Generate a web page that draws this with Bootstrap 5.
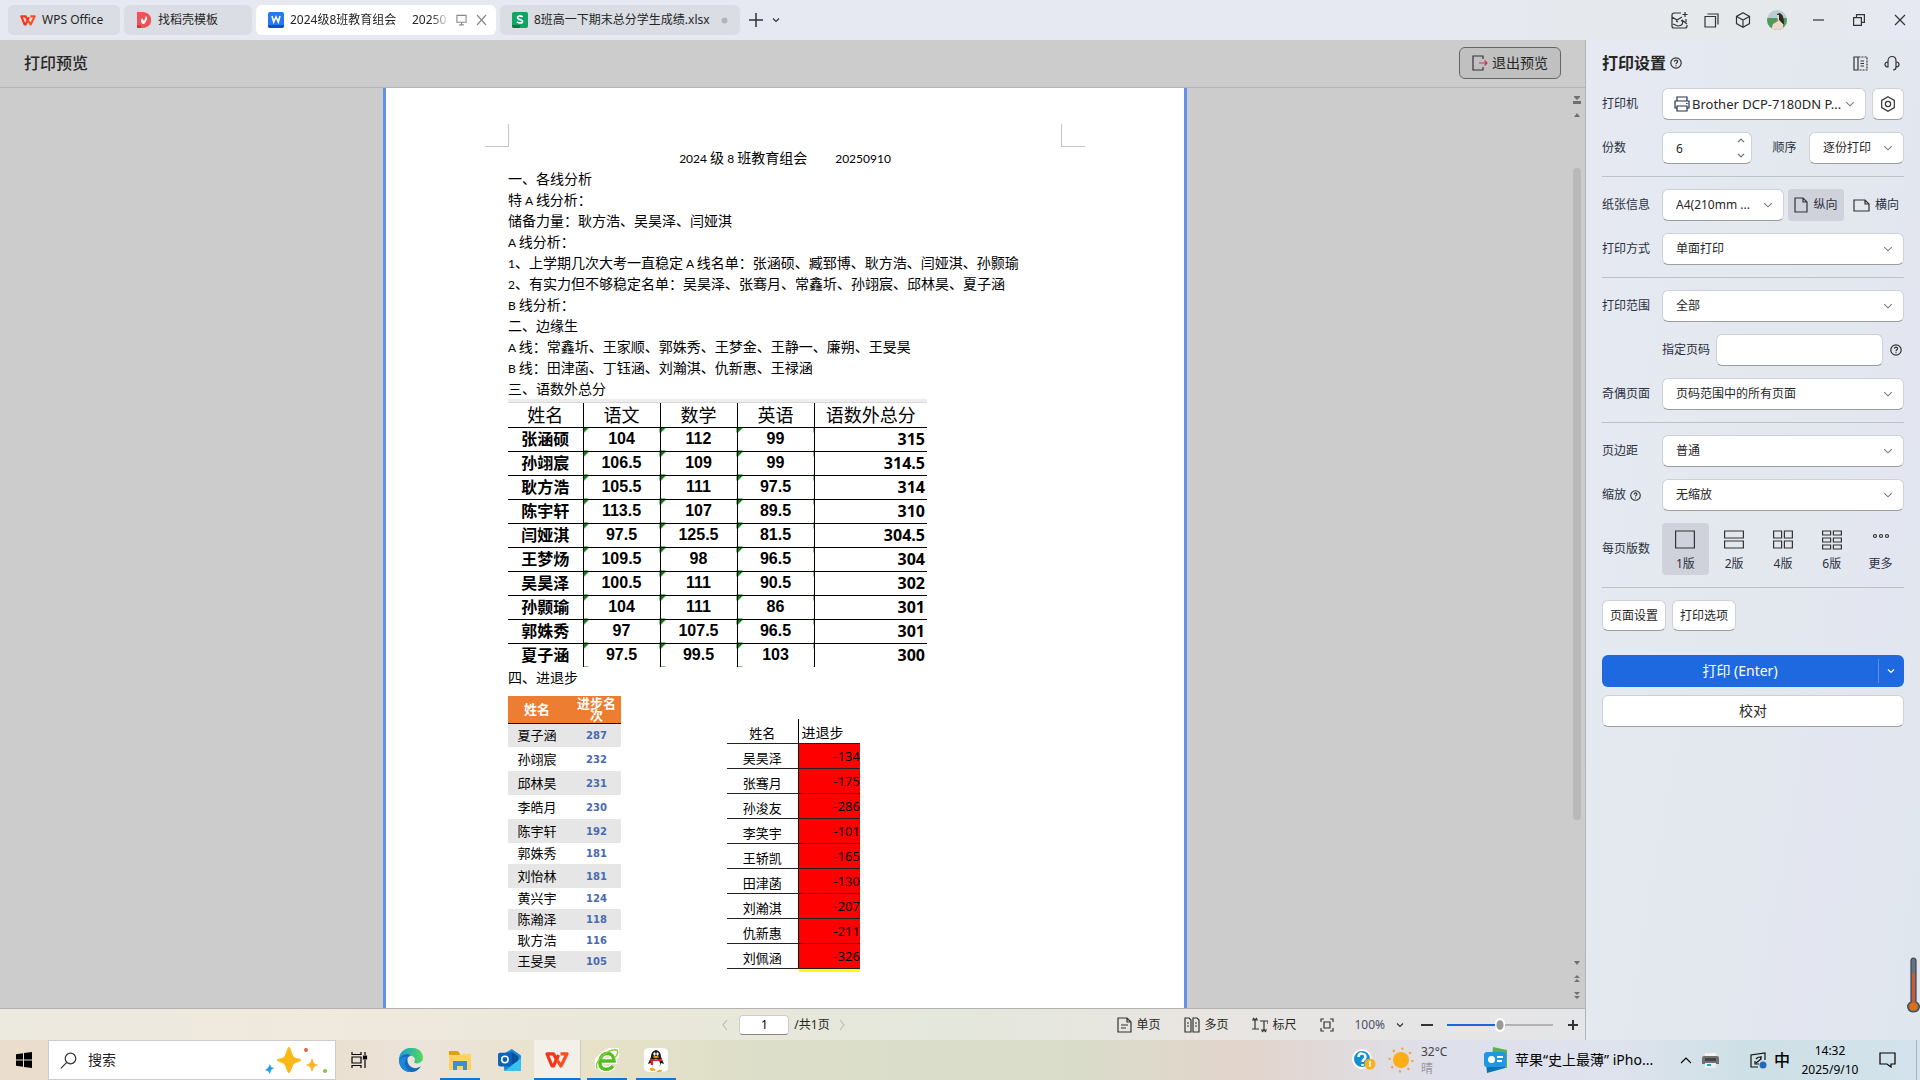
<!DOCTYPE html>
<html lang="zh-CN">
<head>
<meta charset="utf-8">
<meta name="viewport" content="width=device-width, initial-scale=1">
<title>打印预览</title>
<link href="https://cdn.jsdelivr.net/npm/bootstrap@5.3.0/dist/css/bootstrap.min.css" rel="stylesheet">
<style>
body{font-family:"Noto Sans","Noto Sans CJK SC",sans-serif;font-size:12px;line-height:16px;color:#262626;background:#e6e9f2;overflow:hidden}
button{font:inherit;color:inherit;border:0;background:none;padding:0}
svg{display:block;flex:none;fill:none;stroke:#333;stroke-width:1.2}
/* title bar */
.titlebar{height:40px;background:linear-gradient(90deg,#e6e9f2 70%,#e5e9eb 92%,#e6e9f2);padding-left:8px}
.doc-tab{height:30px;background:#dadde4;border-radius:6px;display:flex;align-items:center;white-space:nowrap;overflow:hidden}
.doc-tab.current{background:#fff}
.fade-name{width:160px;white-space:pre;text-align:left;-webkit-mask-image:linear-gradient(90deg,#000 88%,transparent);mask-image:linear-gradient(90deg,#000 88%,transparent)}
.win-btns{gap:16px;padding-right:14px}
/* preview */
.preview{background:#ccc;border-right:1px solid #b3b3b3}
.preview-head{height:48px;border-bottom:1px solid #b3b3b3;padding:0 24px 2px}
.preview-head h1{font-size:16px;line-height:24px;font-weight:500;margin:0}
.exit-btn{width:102px;height:32px;background:#c0c0c0;border:1px solid #666;border-radius:6px;font-size:14px}
.sheet{width:804px;background:#fff;border-left:3px solid #6490e8;border-right:3px solid #6490e8}
.crop-row{padding:36px 99px 0 99px}
.crop-mark{width:24px;height:23px;border-bottom:1px solid #c4c4c4}
.crop-l{border-right:1px solid #c4c4c4}.crop-r{border-left:1px solid #c4c4c4}
.sheet-body{padding:0 122px;color:#000}
.sheet-body p{margin:0;font-size:14px;line-height:21px;height:21px;white-space:nowrap}
.ltn{font-family:Lato,"Noto Sans",sans-serif;font-size:12px;line-height:12px}
.title-gap{padding-left:28px}
.strip{height:4px;background:#ececec;width:419px;border-bottom:1px solid #d8d8d8}
.scores{width:419px;table-layout:fixed;border-collapse:collapse;text-align:center;line-height:20px;font-size:16px;font-weight:700}
.scores th{font-size:18px;font-weight:400;height:24px;padding:0}
.scores td{height:24px;padding:0}
.scores th,.scores td{border-bottom:1px solid #000;border-left:1px solid #000}
.scores th:first-child,.scores td:first-child{border-left:0}
.scores tr:last-child td{border-bottom:0}
.scores td:nth-child(n+2):nth-child(-n+4){font-family:"Liberation Sans",sans-serif;background:linear-gradient(135deg,#0a800a 4px,transparent 4px)}
.scores td:last-child{text-align:right;padding-right:2px;font-family:"Open Sans",sans-serif}
.risers{width:113px;table-layout:fixed;font-size:13px;line-height:13px;text-align:center;border-collapse:collapse}
.risers th{background:#ed7d31;color:#fff;border-bottom:1px solid #111;height:27px;padding:0;line-height:12px;font-weight:700}
.risers td{padding:0;height:21px}
.risers .tall td{height:24px}
.risers tbody tr:nth-child(odd){background:#e7e6e6}
.risers td:last-child{font:700 10px/13px "DejaVu Sans",sans-serif;color:#4a6ab2;padding-left:6px}
.risers th:last-child{padding:0 4px 0 10px}
.fallers{width:133px;table-layout:fixed;font-size:13px;line-height:20px;border-collapse:collapse}
.fallers th,.fallers td{padding:0;height:25px;border-bottom:1px solid #222;text-align:center;vertical-align:bottom;font-weight:400}
.fallers td:last-child{background:#f00;text-align:right;vertical-align:middle}
.fallers th:last-child{font-size:14px;text-align:left;padding-left:3px}
.fallers th:last-child,.fallers td:last-child{border-left:1px solid #000}
.under{height:3px;width:61px;background:#ff0;margin-left:72px}
.scroller{width:15px;padding:8px 4px 8px 3px}
.thumb{height:652px;width:8px;border-radius:4px;background:#b9b9b9}
.scroller svg{stroke:none;fill:#707070}
/* status bar */
.statusbar{height:32px;border-top:1px solid #b3b3b3;border-right:1px solid #b3b3b3;background:linear-gradient(90deg,#ece9df,#f0e9dd 20%,#e9e8da 42%,#e4e7dc 60%,#e8e5e1 75%,#e4e5e8)}
.status-side{flex:1 1 0;min-width:0}
.page-box{width:50px;height:20px;border:1px solid #ccc;border-bottom-color:#888;border-radius:4px;text-align:center;font-size:12px;padding:0}
.zoomer{-webkit-appearance:none;appearance:none;width:106px;height:16px;background:linear-gradient(90deg,#1f66dc 50%,#b4b4b4 50%) center/100% 2px no-repeat}
.zoomer::-webkit-slider-thumb{-webkit-appearance:none;width:10px;height:14px;border-radius:7px;background:radial-gradient(#999 3px,#fff 4px);border:0}
/* settings panel */
.panel{width:334px;padding:0 16px;background:linear-gradient(100deg,#e6e9f2,#e3e8ee 55%,#e3e6f0 75%,#dfe6ee)}
.panel-head{height:48px;padding-bottom:2px}
.panel h2{font-size:16px;line-height:24px;font-weight:700;margin:0}
.set-row{display:flex;align-items:center;height:32px;margin-bottom:12px;color:#2a3040;white-space:nowrap}
.set-label{width:60px;flex:none}
.box{height:32px;border:1px solid #cdd0d6;border-bottom-color:#9b9da2;border-radius:6px;background-color:#fff;font-size:12px;line-height:16px;color:#262626}
select.box{--bs-form-select-bg-img:url("data:image/svg+xml,%3Csvg xmlns='http://www.w3.org/2000/svg' viewBox='0 0 16 16'%3E%3Cpath fill='none' stroke='%23777' stroke-width='1.4' d='m3 5.500 5 5 5-5'/%3E%3C/svg%3E");padding:0 20px 0 13px;background-size:12px;background-position:right 9px center}
#printer{font-size:13px;padding-left:29px}
#order{width:95px;flex:none}
.rule{border:0;border-top:1px solid #bfc2c8;opacity:1;margin:0 0 12px}
.toggle{height:32px;width:56px;border-radius:4px;display:flex;align-items:center;justify-content:center;gap:5px}
.toggle.on,.nup.on{background:#cfd2da}
.nup{width:47px;height:52px;border-radius:4px;display:flex;flex-direction:column;align-items:center;padding-top:7px;gap:6px;margin-right:2px}
.print-btn{height:32px;background:#1f69e0;color:#fff;border-radius:6px;font-size:14px}
.print-main{border-right:1px solid #5790ef;height:24px}
.thermo{position:absolute;right:0;top:957px}
/* taskbar */
.taskbar{height:40px;color:#000;background:linear-gradient(90deg,#eaddce,#eadfcd 16%,#ece3da 22%,#e7e2c8 31%,#dcdec9 40%,#d9ddca 55%,#e3d5cc 65%,#dee0ec 75%,#dfe3ee 84%,#cde0e5 91%,#d3e2ec)}
.search{width:288px;height:40px;background:#fff;border:1px solid #ccc;font-size:14px;padding:0 8px 0 11px}
.search input{border:0;outline:0;width:60px;font-size:14px;padding:0;color:#000}
.search input::placeholder{color:#222}
.app{width:40px;height:40px;display:flex;align-items:center;justify-content:center;margin-right:9px}
.app.open{border-bottom:2px solid #0a78d4;padding-top:2px}
.app.front{background:#f3f0ea;width:47px;margin-right:6px;border-right:1px solid #cfccc0}
.clock{width:72px;text-align:center;line-height:19px}
</style>
<script src="https://cdn.jsdelivr.net/npm/bootstrap@5.3.0/dist/js/bootstrap.bundle.min.js"></script>
</head>
<body class="vh-100 d-flex flex-column position-relative">
<svg width="0" height="0" class="position-absolute">
 <symbol id="wps" viewBox="0 0 24 16"><g fill="none" stroke="#f5341e" stroke-width="3.200" stroke-linejoin="round"><path d="M9.500 1.800H2L7 14h1.500L13.500 3"/><path d="m12 8 4 6 6-12.200h-6.500" stroke="#f8501e"/><path d="m8.500 1.800 3 6"/></g></symbol>
 <symbol id="ask" viewBox="0 0 12 12"><circle cx="6" cy="6" r="5.200"/><path d="M4.500 4.800C4.500 2.500 7.700 2.700 7.600 4.600 7.500 5.800 6 5.800 6 7.200M6 8.200v1.100"/></symbol>
 <symbol id="down" viewBox="0 0 10 10"><path d="m2 3.500 3 3 3-3"/></symbol>
</svg>

<header class="titlebar d-flex align-items-center flex-shrink-0">
 <div class="d-flex" style="gap:4px">
  <button class="doc-tab" style="width:112px;padding-left:12px;gap:6px"><svg width="16" height="11"><use href="#wps"/></svg>WPS Office</button>
  <button class="doc-tab" style="width:128px;padding-left:13px;gap:7px"><svg width="14" height="16" viewBox="0 0 14 16"><path d="M0 0h6c11 1 11 15 0 16H0z" fill="#f0525a" stroke="none"/><path d="M4 8c0 5 4 5 5 1 2-2 1-4 0-5-1 2-1 3-2 5L5 6z" fill="#fff" stroke="none"/><path d="M0 13h4v3H0z" fill="#d93540" stroke="none"/></svg>找稻壳模板</button>
  <button class="doc-tab current" style="width:240px;padding-left:12px;gap:6px"><svg width="16" height="16" viewBox="0 0 16 16"><rect width="16" height="16" rx="2" fill="#2878f5" stroke="none"/><path d="M0 13h16v1a2 2 0 0 1-2 2H2a2 2 0 0 1-2-2z" fill="#1250c4" stroke="none"/><path d="m4 4 1.700 6L8 5l2.300 5L12 4" style="stroke:#fff" stroke-width="1.600"/></svg><span class="fade-name">2024级8班教育组会     20250</span><svg width="11" height="12" viewBox="0 0 12 12" style="stroke:#888"><path d="M1 1h10v7.500H1zM6 9v2M3.500 11.300h5"/></svg><svg width="14" height="12" viewBox="0 0 14 12" style="stroke:#888"><path d="m4 1 9 10M13 1 4 11"/></svg></button>
  <button class="doc-tab" style="width:240px;padding-left:12px;gap:6px"><svg width="16" height="16" viewBox="0 0 16 16"><rect width="16" height="16" rx="2" fill="#10a566" stroke="none"/><path d="M0 13h8v3H2a2 2 0 0 1-2-2z" fill="#087a4b" stroke="none"/><path d="M10.500 5C9 3.300 5.500 3.700 5.500 5.800S10.700 7.300 10.600 9.400C10.500 11.500 6.500 11.500 5 9.700" stroke="#fff" stroke-width="1.700"/></svg>8班高一下期末总分学生成绩.xlsx<svg width="7" height="7" style="margin-left:5px"><circle cx="3.500" cy="3.500" r="3" fill="#b3b5ba" stroke="none"/></svg></button>
 </div>
 <button aria-label="新建" style="margin-left:9px"><svg width="14" height="14" viewBox="0 0 14 14"><path d="M7 0v14M0 7h14" stroke-width="1.500"/></svg></button>
 <button aria-label="标签列表" style="margin-left:8px"><svg width="10" height="10" stroke-width="1.500"><use href="#down"/></svg></button>
 <div class="win-btns d-flex align-items-center ms-auto">
  <svg width="17" height="17" viewBox="0 0 17 17"><path d="M10 1H3a2 2 0 0 0-2 2v11a2 2 0 0 0 2 2h11a2 2 0 0 0 2-2v-1M1 5l5 3 5-3M5 9l2 1M10 9l2-1M2 12l5 2c4 0 6-3 4-6l5 4M14 0v5M11.500 2.500h5M15 7v3"/></svg>
  <svg width="15" height="15" viewBox="0 0 15 15"><path d="M1 3.500h10.500V14H1zM3.500 1H14v10.500"/></svg>
  <svg width="16" height="16" viewBox="0 0 16 16"><path d="m8 .800 6.500 3.600v7.200L8 15.200l-6.500-3.600V4.400zM1.500 4.400 8 8l6.500-3.600M8 8v7"/></svg>
  <svg width="20" height="20" viewBox="0 0 20 20"><defs><clipPath id="face"><circle cx="10" cy="10" r="10"/></clipPath></defs><g clip-path="url(#face)" stroke="none"><path fill="#b9ccd2" d="M0 0h20v20H0z"/><path fill="#4f9a5c" d="M0 8h20v12H0z"/><path fill="#2c2825" d="M10 4c5-3 7 3 7 10l-3 1-3-8z"/><path fill="#eed8c8" d="M10 5h2v5l4 4v6H4l2-6 5-3z"/></g></svg>
  <div class="d-flex align-items-center" style="gap:29px;margin-left:10px">
   <svg width="11" height="12"><path d="M0 6h11"/></svg>
   <svg width="12" height="12" viewBox="0 0 12 12"><path d="M.6 3.600h7.800v7.800H.6zM3.500 3.500V.6h7.900v7.800H8.500"/></svg>
   <svg width="12" height="12" viewBox="0 0 12 12"><path d="m1 1 10 10M11 1 1 11"/></svg>
  </div>
 </div>
</header>

<div class="d-flex flex-grow-1" style="min-height:0">
 <div class="d-flex flex-column flex-grow-1" style="min-width:0">
  <main class="preview flex-grow-1 d-flex flex-column" style="min-height:0">
   <div class="preview-head d-flex align-items-center justify-content-between flex-shrink-0">
    <h1>打印预览</h1>
    <button class="exit-btn d-flex align-items-center justify-content-center gap-1"><svg width="16" height="16" viewBox="0 0 16 16"><path d="M11 4V1H1v14h10v-3"/><path d="M7 8h8M12.500 5.500 15 8l-2.500 2.500" stroke="#d0314f"/></svg>退出预览</button>
   </div>
   <div class="d-flex flex-grow-1" style="min-height:0">
    <div class="flex-grow-1 d-flex justify-content-center">
     <article class="sheet">
      <div class="crop-row d-flex justify-content-between"><div class="crop-mark crop-l"></div><div class="crop-mark crop-r"></div></div>
      <div class="sheet-body">
       <p class="text-center"><span class="ltn">2024 </span>级<span class="ltn"> 8 </span>班教育组会<span class="ltn title-gap">20250910</span></p>
       <p>一、各线分析</p>
       <p>特<span class="ltn"> A </span>线分析：</p>
       <p>储备力量：耿方浩、吴昊泽、闫娅淇</p>
       <p><span class="ltn">A </span>线分析：</p>
       <p><span class="ltn">1</span>、上学期几次大考一直稳定<span class="ltn"> A </span>线名单：张涵硕、臧郅博、耿方浩、闫娅淇、孙颢瑜</p>
       <p><span class="ltn">2</span>、有实力但不够稳定名单：吴昊泽、张骞月、常鑫圻、孙翊宸、邱林昊、夏子涵</p>
       <p><span class="ltn">B </span>线分析：</p>
       <p>二、边缘生</p>
       <p><span class="ltn">A </span>线：常鑫圻、王家顺、郭姝秀、王梦金、王静一、廉朔、王旻昊</p>
       <p><span class="ltn">B </span>线：田津菡、丁钰涵、刘瀚淇、仇新惠、王禄涵</p>
       <p>三、语数外总分</p>
       <div class="strip"></div>
       <table class="scores">
        <colgroup><col style="width:75px"><col style="width:77px"><col style="width:77px"><col style="width:77px"><col></colgroup>
        <thead><tr><th>姓名</th><th>语文</th><th>数学</th><th>英语</th><th>语数外总分</th></tr></thead>
        <tbody>
        <tr><td>张涵硕</td><td>104</td><td>112</td><td>99</td><td>315</td></tr>
        <tr><td>孙翊宸</td><td>106.5</td><td>109</td><td>99</td><td>314.5</td></tr>
        <tr><td>耿方浩</td><td>105.5</td><td>111</td><td>97.5</td><td>314</td></tr>
        <tr><td>陈宇轩</td><td>113.5</td><td>107</td><td>89.5</td><td>310</td></tr>
        <tr><td>闫娅淇</td><td>97.5</td><td>125.5</td><td>81.5</td><td>304.5</td></tr>
        <tr><td>王梦炀</td><td>109.5</td><td>98</td><td>96.5</td><td>304</td></tr>
        <tr><td>吴昊泽</td><td>100.5</td><td>111</td><td>90.5</td><td>302</td></tr>
        <tr><td>孙颢瑜</td><td>104</td><td>111</td><td>86</td><td>301</td></tr>
        <tr><td>郭姝秀</td><td>97</td><td>107.5</td><td>96.5</td><td>301</td></tr>
        <tr><td>夏子涵</td><td>97.5</td><td>99.5</td><td>103</td><td>300</td></tr>
        </tbody>
       </table>
       <p>四、进退步</p>
       <div class="d-flex align-items-end" style="gap:106px;padding-top:8px">
        <table class="risers">
         <colgroup><col style="width:58px"><col></colgroup>
         <thead><tr><th>姓名</th><th>进步名次</th></tr></thead>
         <tbody>
         <tr class="tall"><td>夏子涵</td><td>287</td></tr>
         <tr class="tall"><td>孙翊宸</td><td>232</td></tr>
         <tr class="tall"><td>邱林昊</td><td>231</td></tr>
         <tr class="tall"><td>李皓月</td><td>230</td></tr>
         <tr class="tall"><td>陈宇轩</td><td>192</td></tr>
         <tr><td>郭姝秀</td><td>181</td></tr>
         <tr class="tall"><td>刘怡林</td><td>181</td></tr>
         <tr><td>黄兴宇</td><td>124</td></tr>
         <tr><td>陈瀚泽</td><td>118</td></tr>
         <tr><td>耿方浩</td><td>116</td></tr>
         <tr><td>王旻昊</td><td>105</td></tr>
         </tbody>
        </table>
        <div>
         <table class="fallers">
          <colgroup><col style="width:71px"><col></colgroup>
          <thead><tr><th>姓名</th><th>进退步</th></tr></thead>
          <tbody>
          <tr><td>吴昊泽</td><td>-134</td></tr>
          <tr><td>张骞月</td><td>-175</td></tr>
          <tr><td>孙浚友</td><td>-286</td></tr>
          <tr><td>李笑宇</td><td>-101</td></tr>
          <tr><td>王轿凯</td><td>-165</td></tr>
          <tr><td>田津菡</td><td>-130</td></tr>
          <tr><td>刘瀚淇</td><td>-207</td></tr>
          <tr><td>仇新惠</td><td>-211</td></tr>
          <tr><td>刘佩涵</td><td>-326</td></tr>
          </tbody>
         </table>
         <div class="under"></div>
        </div>
       </div>
      </div>
     </article>
    </div>
    <div class="scroller d-flex flex-column align-items-center justify-content-between flex-shrink-0">
     <div class="d-flex flex-column align-items-center">
      <svg width="8" height="9" viewBox="0 0 8 9"><path d="M1 0h6v1L4 4 1 1zM0 5h8v3H0z"/></svg>
      <svg width="6" height="5" viewBox="0 0 6 5" style="margin:8px 0 50px"><path d="M3 0 6 4H0z"/></svg>
      <div class="thumb"></div>
     </div>
     <div class="d-flex flex-column align-items-center" style="gap:9px">
      <svg width="6" height="5" viewBox="0 0 6 5"><path d="M0 0h6L3 4z"/></svg>
      <svg width="6" height="8" viewBox="0 0 6 8"><path d="m3 0 3 3H0zM3 4l3 3H0z"/></svg>
      <svg width="6" height="8" viewBox="0 0 6 8"><path d="M0 0h6L3 3zM0 4h6L3 7z"/></svg>
     </div>
    </div>
   </div>
  </main>
  <footer class="statusbar d-flex align-items-center flex-shrink-0">
   <div class="status-side"></div>
   <div class="d-flex align-items-center" style="margin-right:12px">
    <button aria-label="上一页"><svg width="8" height="12" viewBox="0 0 8 12" style="stroke:#bbb;margin-right:10px"><path d="M6 1 2 6l4 5"/></svg></button>
    <input class="page-box" aria-label="页码" value="1"><span style="margin:0 8px 0 5px">/共1页</span>
    <button aria-label="下一页"><svg width="8" height="12" viewBox="0 0 8 12" style="stroke:#bbb"><path d="m2 1 4 5-4 5"/></svg></button>
   </div>
   <div class="status-side d-flex align-items-center justify-content-end" style="padding-right:6px">
    <button class="d-flex align-items-center gap-1" style="margin-right:24px"><svg width="15" height="16" viewBox="0 0 15 16"><path d="M1 1h9l4 4v10H1zM10 1v4h4M4 8h7M4 11h5"/></svg>单页</button>
    <button class="d-flex align-items-center gap-1" style="margin-right:24px"><svg width="16" height="16" viewBox="0 0 16 16"><path d="M1 1h4l2 2v12H1zM9 1h4l2 2v12H9zM3 6h2M3 9h2M11 6h2M11 9h2"/></svg>多页</button>
    <button class="d-flex align-items-center gap-1" style="margin-right:24px"><svg width="16" height="16" viewBox="0 0 16 16"><path d="M0 3h6M3 3v9M0 12h7M1 1l2 2 2-2M8 4h8v3M12 4v9M9 13h6M10 15l2-2 2 2"/></svg>标尺</button>
    <button aria-label="适应页面" style="margin-right:20px"><svg width="14" height="14" viewBox="0 0 14 14"><path d="M1 4V1h3M10 1h3v3M13 10v3h-3M4 13H1v-3M4 4h6v6H4z"/></svg></button>
    <button class="d-flex align-items-center" style="gap:10px;color:#46516a;margin-right:16px">100%<svg width="10" height="10" stroke-width="2"><use href="#down"/></svg></button>
    <button aria-label="缩小"><svg width="12" height="12"><path d="M0 6h12" stroke-width="2"/></svg></button>
    <input class="zoomer" type="range" aria-label="缩放比例" min="0" max="100" value="50" style="margin:0 14px">
    <button aria-label="放大"><svg width="12" height="12"><path d="M1 6h10M6 1v10" stroke-width="2"/></svg></button>
   </div>
  </footer>
 </div>

 <aside class="panel flex-shrink-0">
  <div class="panel-head d-flex align-items-center">
   <h2>打印设置</h2><svg width="12" height="12" style="margin-left:4px"><use href="#ask"/></svg>
   <svg class="ms-auto" width="15" height="15" viewBox="0 0 15 15"><path d="M5.500 1H14v13H5.500" stroke-dasharray="2 1"/><path d="M1 1h4v13H1zM7.500 5H11M7.500 7.500H11M7.500 10H11"/></svg>
   <svg width="16" height="16" viewBox="0 0 16 16" style="margin-left:16px;margin-right:4px"><path d="M4 7c-2 0-3 1-3 2.500S2 12 4 12V6c0-6 8-6 8 0v6c2 0 3-1 3-2.500S14 7 12 7M12 12c0 2-1 3-3 3"/></svg>
  </div>
  <div class="set-row"><label class="set-label" for="printer">打印机</label>
   <div class="position-relative flex-grow-1"><select id="printer" class="form-select box"><option>Brother DCP-7180DN P...</option></select>
    <svg class="position-absolute" style="left:12px;top:8px;stroke:#24304a" width="16" height="16" viewBox="0 0 16 16"><path d="M3 5V1h10v4M3 12H1V5h14v7h-2M3 10h10v5H3zM12 7.500h1.500"/></svg></div>
   <button class="box d-flex align-items-center justify-content-center" aria-label="打印机属性" style="width:32px;margin-left:6px"><svg width="16" height="16" viewBox="0 0 16 16"><path d="m8 .700 6.300 3.700v7.200L8 15.300l-6.300-3.700V4.400z"/><circle cx="8" cy="8" r="2.600"/></svg></button></div>
  <div class="set-row"><label class="set-label" for="copies">份数</label>
   <div class="position-relative"><input id="copies" class="box" value="6" style="width:90px;padding:0 13px"><svg class="position-absolute" style="right:6px;top:4px;stroke:#777" width="10" height="24" viewBox="0 0 10 24"><path d="m2 6 3-3 3 3M2 18l3 3 3-3"/></svg></div>
   <label class="ms-auto me-auto" for="order" style="padding-left:8px">顺序</label><select id="order" class="form-select box"><option>逐份打印</option></select></div>
  <hr class="rule">
  <div class="set-row"><label class="set-label" for="paper">纸张信息</label><select id="paper" class="form-select box" style="width:122px"><option>A4(210mm ...</option></select>
   <button class="toggle on" style="margin-left:4px"><svg width="14" height="16" viewBox="0 0 14 16"><path d="M1 1h8l4 4v10H1zM9 1v4h4"/></svg>纵向</button><button class="toggle" style="margin-left:4px"><svg width="17" height="13" viewBox="0 0 17 13"><path d="M1 1h11l4 4v7H1zM12 1v4h4"/></svg>横向</button></div>
  <div class="set-row"><label class="set-label" for="mode">打印方式</label><select id="mode" class="form-select box"><option>单面打印</option></select></div>
  <hr class="rule">
  <div class="set-row"><label class="set-label" for="range">打印范围</label><select id="range" class="form-select box"><option>全部</option></select></div>
  <div class="set-row" style="padding-left:60px"><label for="pages" style="margin-right:6px">指定页码</label><input id="pages" class="box flex-fill" style="min-width:0"><svg width="12" height="12" style="margin:0 2px 0 7px"><use href="#ask"/></svg></div>
  <div class="set-row"><label class="set-label" for="odd">奇偶页面</label><select id="odd" class="form-select box"><option>页码范围中的所有页面</option></select></div>
  <hr class="rule">
  <div class="set-row"><label class="set-label" for="margin">页边距</label><select id="margin" class="form-select box"><option>普通</option></select></div>
  <div class="set-row"><label class="set-label d-flex align-items-center gap-1" for="scale">缩放<svg width="11" height="11"><use href="#ask"/></svg></label><select id="scale" class="form-select box"><option>无缩放</option></select></div>
  <div class="set-row" style="height:52px"><span class="set-label">每页版数</span>
   <button class="nup on"><svg width="20" height="20" viewBox="0 0 20 20"><path d="M.6 1h18.800v17H.6z"/></svg>1版</button>
   <button class="nup"><svg width="20" height="20" viewBox="0 0 20 20"><path d="M.6 1h18.800v7H.6zM.6 11h18.800v7H.6z"/></svg>2版</button>
   <button class="nup"><svg width="20" height="20" viewBox="0 0 20 20"><path d="M.6 1h8v7h-8zM11.400 1h8v7h-8zM.6 11h8v7h-8zM11.400 11h8v7h-8z"/></svg>4版</button>
   <button class="nup"><svg width="20" height="20" viewBox="0 0 20 20"><path d="M.6 1h8v4h-8zM11.400 1h8v4h-8zM.6 8h8v4h-8zM11.400 8h8v4h-8zM.6 15h8v4h-8zM11.400 15h8v4h-8z"/></svg>6版</button>
   <button class="nup me-0"><svg width="20" height="20" viewBox="0 0 20 20"><circle cx="4" cy="6" r="1.500"/><circle cx="10" cy="6" r="1.500"/><circle cx="16" cy="6" r="1.500"/></svg>更多</button></div>
  <hr class="rule">
  <div class="d-flex" style="gap:6px;margin-bottom:24px"><button class="box" style="width:64px;height:31px">页面设置</button><button class="box" style="width:64px;height:31px">打印选项</button></div>
  <div class="print-btn d-flex align-items-center"><button class="print-main flex-grow-1">打印 (Enter)</button><button aria-label="更多打印方式" style="padding:0 8px 0 7px"><svg width="10" height="10" style="stroke:#fff"><use href="#down"/></svg></button></div>
  <button class="box w-100 mt-2" style="font-size:14px">校对</button>
 </aside>
</div>

<svg class="thermo" width="13" height="57" viewBox="0 0 13 57"><path d="M4 4c0-4 5-4 5 0v41c6 3 3 10-2.500 10S-2 48 4 45z" fill="#66727e" stroke="#3d4650"/><path d="M6.500 16v33" stroke="#e0542c" stroke-width="2.500"/><circle cx="6.500" cy="49.500" r="4" fill="#e0700c" stroke="none"/></svg>

<nav class="taskbar d-flex align-items-center flex-shrink-0">
 <button aria-label="开始" class="d-flex justify-content-center" style="width:48px"><svg width="16" height="16" viewBox="0 0 16 16"><path d="M0 2.300 7 1.300V7.600H0zM8 1.100 16 0v7.600H8zM0 8.500h7v6.300l-7-1zM8 8.500h8V16l-8-1.100z" fill="#000" stroke="none"/></svg></button>
 <div class="search d-flex align-items-center"><svg width="17" height="17" viewBox="0 0 17 17"><circle cx="10.500" cy="6.500" r="5.300"/><path d="m6.800 10.300-6 6"/></svg><input placeholder="搜索" aria-label="搜索" style="margin-left:11px">
  <svg class="ms-auto" width="62" height="28" viewBox="0 0 62 28"><g stroke="none"><path d="M24 1c2 0 3 8 5 10s7 1 7 3-5 2-7 4-3 9-5 9-3-7-5-9-7-2-7-4 5-1 7-3 3-10 5-10z" fill="#fbb917"/><path d="m47 12 2 5 4 2-4 2-2 5-2-5-4-2 4-2z" fill="#fbb62b"/><path d="m5 18 1 3 3 1-3 2-1 4-2-3-3-1 3-2z" fill="#1f9cea"/><circle cx="41" cy="4" r="2" fill="#ee6237"/><circle cx="60" cy="25" r="2" fill="#82c341"/></g></svg></div>
 <button aria-label="任务视图" class="d-flex justify-content-center" style="width:47px"><svg width="17" height="16" viewBox="0 0 17 16" style="stroke:#000"><path d="M1 0v2.500h9V0M1 5h9v6H1zM1 16v-2.500h9V16M14 0v3M14 8v8"/><path d="M12.500 4h3v3h-3z" fill="#000"/></svg></button>
 <button class="app" aria-label="Edge" style="margin:0 9px 0 8px"><svg width="24" height="24" viewBox="0 0 24 24"><defs><linearGradient id="eg"><stop stop-color="#159bdc"/><stop offset="1" stop-color="#55d858"/></linearGradient></defs><g stroke="none"><path d="M0 12C0-4 24-4 24 10c0 5-7 7-9 4 3-4-2-8-7-6-4 1-7 3-8 4z" fill="url(#eg)"/><path d="M0 12c1-5 9-8 12-4-4 0-4 4-3 7 2 5 8 7 13 3-6 11-22 6-22-6z" fill="#1469c0"/><path d="M9 9c-5 3-4 12 4 15C5 25 0 19 0 12c2-3 6-4 9-3z" fill="#1b87d9"/></g></svg></button>
 <button class="app open" aria-label="文件资源管理器"><svg width="22" height="19" viewBox="0 0 22 19"><g stroke="none"><path d="M0 0h9l2 3v4H0z" fill="#dca01b"/><path d="M0 4h11l2-1h9v16H0z" fill="#ffd35c"/><path d="M4 19v-9h14v9h-4v-4H8v4z" fill="#3d8fd4"/></g></svg></button>
 <button class="app" aria-label="Outlook" style="margin-right:5px"><svg width="25" height="22" viewBox="0 0 25 24"><g stroke="none"><path d="m5 6 10-6 10 7v15a2 2 0 0 1-2 2H7z" fill="#1489d8"/><path d="m9 7 6-4 7 5v6l-9 4z" fill="#0a4f9a"/><path d="m7 24 18-14v12a2 2 0 0 1-2 2z" fill="#38c1f1"/><rect y="4" width="15" height="15" rx="2" fill="#0b62b8"/></g><circle cx="7.500" cy="11.500" r="3.500" style="stroke:#fff" stroke-width="1.700"/></svg></button>
 <button class="app open front" aria-label="WPS"><svg width="24" height="16"><use href="#wps"/></svg></button>
 <button class="app open" aria-label="360"><svg width="24" height="24" viewBox="0 0 24 24"><path d="M5 13h14C19 2 6 3 5 13s9 10 13 5M1 20C-1 13 12 1 22 2c2 3-1 7-3 8" stroke="#fff" stroke-width="6"/><path d="M5 13h14C19 3 6 3 5 13s9 10 13 5" stroke="#55bd22" stroke-width="3.500"/><path d="M2 20C-1 14 13 0 22 2c2 3-1 7-3 8" stroke="#87cf37" stroke-width="1.500"/></svg></button>
 <button class="app open" aria-label="QQ"><svg width="24" height="24" viewBox="0 0 24 24"><g stroke="none"><rect width="24" height="24" rx="5" fill="#fff"/><path d="M7 9c0-9 10-9 10 0l3 7-3-1c-1 6-9 6-10 0l-3 1z" fill="#151515"/><ellipse cx="12" cy="16" rx="4" ry="5" fill="#fff"/><path d="M6 10c4 2 8 2 12 0v3H9v4H7z" fill="#e91c26"/><ellipse cx="10.500" cy="6" rx="1.200" ry="1.700" fill="#fff"/><ellipse cx="13.500" cy="6" rx="1.200" ry="1.700" fill="#fff"/><path d="M8.500 9q3.500-2 7 0-3.500 2-7 0M6 20q3-1 6 2-4 2-6 0m6 2q3-3 6-2 0 3-6 2" fill="#f7a718"/></g></svg></button>
 <div class="d-flex align-items-center ms-auto">
  <svg width="24" height="22" viewBox="0 0 24 22"><circle cx="10" cy="10" r="9" fill="#0f91d1" stroke="#fff" stroke-width="2"/><path d="M6.500 8c0-5 7-4 7 0 0 2.500-3 2.500-3 5M10.500 15v2" stroke="#fff" stroke-width="2.500"/><circle cx="18" cy="15" r="5.500" fill="#f7b01e" stroke="none"/><path d="M18 12v6" stroke="#fff" stroke-width="1.500"/></svg>
  <svg width="26" height="26" viewBox="0 0 26 26" style="margin-left:12px"><circle cx="13" cy="13" r="11.500" stroke="#f79b1a" stroke-width="2" stroke-dasharray="2 7.030"/><circle cx="13" cy="13" r="8" fill="#fdad15" stroke="none"/></svg>
  <div style="width:63px;margin-left:7px;line-height:17px;color:#444">32°C<br><span style="color:#999">晴</span></div>
  <svg width="24" height="26" viewBox="0 0 24 26"><g stroke="none"><path d="m9 0 14 3v18L7 20z" fill="#61ae50"/><path d="M1 7l20-1v15L3 26z" fill="#0874bc"/><rect y="5" width="22" height="15" rx="3" fill="#2097e2"/><circle cx="7.500" cy="12.500" r="3.500" fill="#fff"/></g><path d="M13 10h6M13 14h5" stroke="#fff" stroke-width="2"/></svg>
  <span style="font-size:14px;margin-left:7px;width:165px;white-space:nowrap">苹果“史上最薄” iPho...</span>
  <svg width="12" height="8" viewBox="0 0 12 8" style="stroke:#000"><path d="m1 7 5-5 5 5"/></svg>
  <svg width="17" height="15" viewBox="0 0 17 15" style="margin:0 31px 0 10px"><g stroke="none"><path d="M3 0h11v5H3z" fill="#f4f4f4"/><path d="M0 5q0-2 2-2h13q2 0 2 2v6H0z" fill="#707070"/><path d="M3 5h11v3H3z" fill="#444"/><path d="M3 10h11v5H3z" fill="#eee"/><path d="M5 11h4v2H5z" fill="#2aa0c8"/></g></svg>
  <svg width="17" height="17" viewBox="0 0 17 17" style="stroke:#111"><path d="M8 15H1V3l14-2v7M5 9v3h4M6 7q4-4 5 0l-5 4M11 4v3"/><circle cx="13" cy="13" r="3.500" fill="#2068c0" stroke="none"/></svg>
  <span style="font-size:16px;font-weight:500;margin:0 4px 0 7px">中</span>
  <div class="clock" style="margin-right:13px">14:32<br>2025/9/10</div>
  <svg width="17" height="16" viewBox="0 0 17 16" style="stroke:#000"><path d="M1 1h15v11h-4v3l-4-3H1z"/></svg>
  <div style="width:1px;height:40px;background:#a9b5bc;margin:0 3px 0 20px"></div>
 </div>
</nav>
</body>
</html>
